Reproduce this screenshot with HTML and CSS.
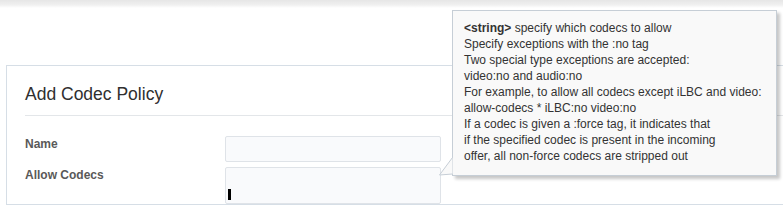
FILE: index.html
```html
<!DOCTYPE html>
<html lang="en">
<head>
    <meta charset="UTF-8">
    <title>Add Codec Policy</title>
    <link rel="stylesheet" href="styles.css">
</head>
<body>

    <div class="topbar"></div>

    <div class="panel">
        <div class="panel-header">Add Codec Policy</div>

        <div class="form">
            <div class="form-label">Name</div>
            <div class="form-input name-input"></div>

            <div class="form-label">Allow Codecs</div>
            <div class="form-input codecs-input"><span class="caret"></span></div>
        </div>
    </div>

    <!-- help tooltip for Allow Codecs -->
    <div class="tooltip">
        <svg class="tooltip-tail" width="14" height="20" viewBox="0 0 14 20">
            <polygon points="13.5,0.5 0.5,18 13.5,17" fill="#f9f9f9"/>
            <polyline points="13.5,0.5 0.5,18 13.5,17" fill="none" stroke="#c6ced6" stroke-width="1"/>
        </svg>
        <div><b>&lt;string&gt;</b> specify which codecs to allow</div>
        <div>Specify exceptions with the :no tag</div>
        <div>Two special type exceptions are accepted:</div>
        <div>video:no and audio:no</div>
        <div>For example, to allow all codecs except iLBC and video:</div>
        <div>allow-codecs * iLBC:no video:no</div>
        <div>If a codec is given a :force tag, it indicates that</div>
        <div>if the specified codec is present in the incoming</div>
        <div>offer, all non-force codecs are stripped out</div>
    </div>

</body>
</html>
```

FILE: styles.css
```css
html, body {
    margin: 0;
    padding: 0;
    background: #fff;
    overflow: hidden;
}
body {
    font-family: "Liberation Sans", Arial, sans-serif;
    color: #333;
    width: 783px;
    height: 208px;
    position: relative;
}
.topbar {
    height: 8px;
    background: linear-gradient(#e6e6e6, #f0f0f0 60%, #fff);
}
.panel {
    margin: 57px 0 0 6px;
    border: 1px solid #d6dee6;
    border-right: none;
    padding: 0 0 0 18px;
}
.panel-header {
    font-size: 17.5px;
    line-height: 22px;
    color: #2f2f2f;
    padding: 17px 0 10px;
    border-bottom: 1px solid #e3e6e9;
}
.form {
    display: grid;
    grid-template-columns: 200px 216px;
    row-gap: 5px;
    margin-top: 20px;
}
.form-label {
    font-size: 12px;
    line-height: 15px;
    font-weight: bold;
    color: #595959;
    padding-top: 1px;
}
.form-input {
    box-sizing: border-box;
    background: #f9fafc;
    border: 1px solid #dfe3e8;
    border-radius: 2px;
}
.name-input {
    height: 26px;
}
.codecs-input {
    height: 37px;
    display: flex;
    align-items: flex-end;
    padding: 0 0 3px 2px;
}
.caret {
    width: 3px;
    height: 11px;
    background: #000;
}
.tooltip {
    position: absolute;
    left: 452px;
    top: 10px;
    box-sizing: border-box;
    width: 325px;
    height: 166px;
    background: #f9f9f9;
    border: 1px solid #c6ced6;
    box-shadow: 3px 3px 3px rgba(0, 0, 0, 0.22);
    padding: 9px 0 0 11px;
    font-size: 12px;
    line-height: 16px;
    color: #333;
}
.tooltip-tail {
    position: absolute;
    left: -14px;
    top: 146px;
}
```
